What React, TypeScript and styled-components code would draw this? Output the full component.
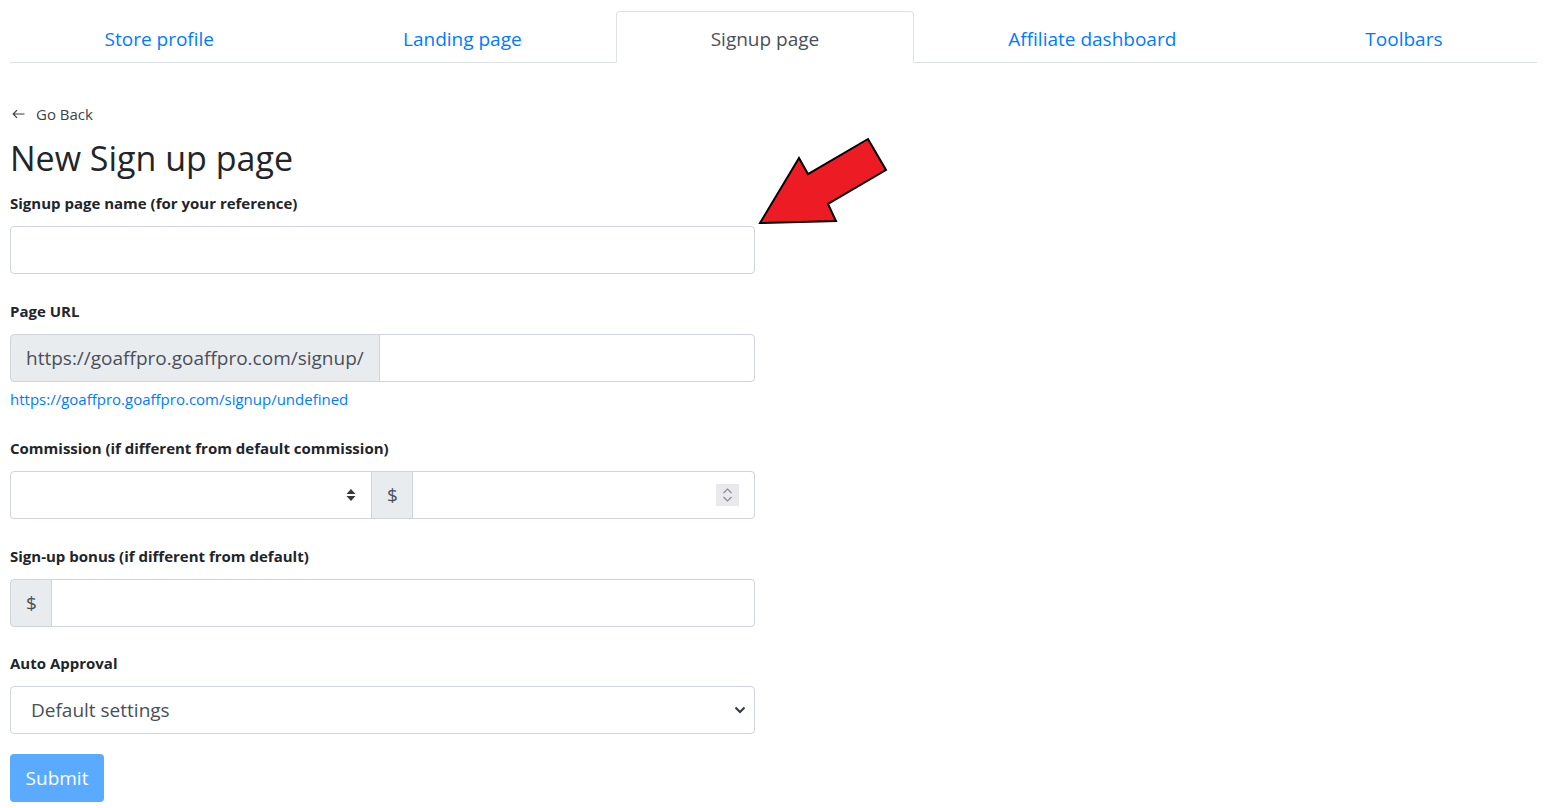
import React from "react";
import styled, { createGlobalStyle } from "styled-components";

const Global = createGlobalStyle`
  html, body { margin: 0; padding: 0; background: #fff; }
  body { font-family: "Open Sans", "Noto Sans", Arial, sans-serif; color: #212529; }
  * { box-sizing: border-box; }
`;

const Page = styled.div`
  position: relative;
  padding: 11px 10px 0 10px;
  width: 1547px;
`;

const Nav = styled.nav`
  display: flex;
  border-bottom: 1px solid #dee2e6;
`;

const Tab = styled.a<{ $active?: boolean }>`
  flex: 1 1 auto;
  text-align: center;
  height: 52px;
  margin-bottom: -1px;
  padding: 4px 16px 0 16px;
  display: flex;
  align-items: center;
  justify-content: center;
  font-size: 19px;
  line-height: 1;
  border: 1px solid transparent;
  border-radius: 4px 4px 0 0;
  color: ${(p) => (p.$active ? "#495057" : "#007bff")};
  ${(p) => (p.$active ? "border-color: #dee2e6 #dee2e6 #fff; background:#fff;" : "")}
  cursor: pointer;
`;

const Form = styled.div`
  width: 745px;
  padding-top: 40px;
`;

const BackLink = styled.div`
  display: flex;
  align-items: center;
  gap: 11px;
  font-size: 15px;
  line-height: 22px;
  color: #3d4349;
  padding-left: 2px;
`;

const Title = styled.h2`
  margin: 12px 0 12px 0;
  font-weight: 400;
  font-size: 34px;
  line-height: 43px;
  color: #212529;
`;

const Group = styled.div<{ $gap?: number }>`
  margin-bottom: ${(p) => p.$gap ?? 26}px;
`;

const Label = styled.div`
  font-weight: 700;
  font-size: 15px;
  line-height: 23px;
  height: 23px;
  margin-bottom: 11px;
  color: #212529;
`;

const Field = styled.div`
  height: 48px;
  border: 1px solid #ced4da;
  border-radius: 4px;
  background: #fff;
  display: flex;
  align-items: center;
  padding: 0 8px 0 20px;
  font-size: 19px;
  color: #495057;
`;

const InputGroup = styled.div`
  display: flex;
  height: 48px;
`;

const Addon = styled.div<{ $first?: boolean; $w?: number }>`
  display: flex;
  align-items: center;
  padding: 0 15px;
  ${(p) => (p.$w ? `width: ${p.$w}px; flex: none;` : "")}
  background: #e9ecef;
  border: 1px solid #ced4da;
  border-radius: ${(p) => (p.$first ? "4px 0 0 4px" : "0")};
  margin-left: ${(p) => (p.$first ? "0" : "-1px")};
  font-size: 19px;
  color: #495057;
  white-space: nowrap;
`;

const GroupInput = styled.div<{ $w?: number; $first?: boolean }>`
  height: 48px;
  border: 1px solid #ced4da;
  margin-left: ${(p) => (p.$first ? "0" : "-1px")};
  border-radius: ${(p) => (p.$first ? "4px 0 0 4px" : "0 4px 4px 0")};
  background: #fff;
  display: flex;
  align-items: center;
  justify-content: flex-end;
  ${(p) => (p.$w ? `width: ${p.$w}px; flex: none;` : "flex: 1 1 auto;")}
  padding: 0 15px 0 16px;
`;

const UrlHint = styled.a`
  display: block;
  margin-top: 6px;
  font-size: 15px;
  line-height: 22px;
  color: #007bff;
  text-decoration: none;
`;

const Spinner = styled.div`
  width: 23px;
  height: 22px;
  background: #e9e9ed;
  display: flex;
  align-items: center;
  justify-content: center;
`;

const SelectText = styled.span`
  flex: 1;
`;

const SubmitButton = styled.button`
  display: block;
  height: 48px;
  width: 94px;
  border: none;
  border-radius: 4px;
  background: #5aaaff;
  color: #fff;
  font-family: inherit;
  font-size: 19px;
  padding: 0;
`;

const ArrowSvg = styled.svg`
  position: absolute;
  left: 755px;
  top: 135px;
`;

export default function App() {
  return (
    <Page>
      <Global />
      <Nav>
        <Tab>Store profile</Tab>
        <Tab>Landing page</Tab>
        <Tab $active>Signup page</Tab>
        <Tab>Affiliate dashboard</Tab>
        <Tab>Toolbars</Tab>
      </Nav>
      <Form>
        <BackLink>
          <svg width="13" height="10" viewBox="0 0 13 10">
            <path d="M12.5 5H1.5M5 1.2L1.2 5L5 8.8" fill="none" stroke="#3d4349" strokeWidth="1.2" />
          </svg>
          <span>Go Back</span>
        </BackLink>
        <Title>New Sign up page</Title>
        <Group>
          <Label>Signup page name (for your reference)</Label>
          <Field />
        </Group>
        <Group $gap={27}>
          <Label>Page URL</Label>
          <InputGroup>
            <Addon $first>https://goaffpro.goaffpro.com/signup/</Addon>
            <GroupInput />
          </InputGroup>
          <UrlHint>https://goaffpro.goaffpro.com/signup/undefined</UrlHint>
        </Group>
        <Group>
          <Label>Commission (if different from default commission)</Label>
          <InputGroup>
            <GroupInput $w={362} $first>
              <svg width="10" height="14" viewBox="0 0 10 14">
                <path d="M5 1L9.5 6H0.5Z M5 13L0.5 8H9.5Z" fill="#343a40" />
              </svg>
            </GroupInput>
            <Addon $w={42}>$</Addon>
            <GroupInput>
              <Spinner>
                <svg width="11" height="16" viewBox="0 0 11 16">
                  <path d="M1.5 6L5.5 2L9.5 6M1.5 10L5.5 14L9.5 10" fill="none" stroke="#8a8a8f" strokeWidth="1.2" />
                </svg>
              </Spinner>
            </GroupInput>
          </InputGroup>
        </Group>
        <Group $gap={25}>
          <Label>Sign-up bonus (if different from default)</Label>
          <InputGroup>
            <Addon $first $w={42}>$</Addon>
            <GroupInput />
          </InputGroup>
        </Group>
        <Group $gap={20}>
          <Label>Auto Approval</Label>
          <Field>
            <SelectText>Default settings</SelectText>
            <svg width="12" height="8" viewBox="0 0 12 8">
              <path d="M1.5 1.5L6 6L10.5 1.5" fill="none" stroke="#343a40" strokeWidth="2" />
            </svg>
          </Field>
        </Group>
        <SubmitButton disabled>Submit</SubmitButton>
      </Form>
      <ArrowSvg width="135" height="92" viewBox="0 0 135 92">
        <polygon
          points="5,88 44,23 53,39 113,4 131,35 73,69 81,86"
          fill="#ed1c24"
          stroke="#000"
          strokeWidth="2"
        />
      </ArrowSvg>
    </Page>
  );
}
